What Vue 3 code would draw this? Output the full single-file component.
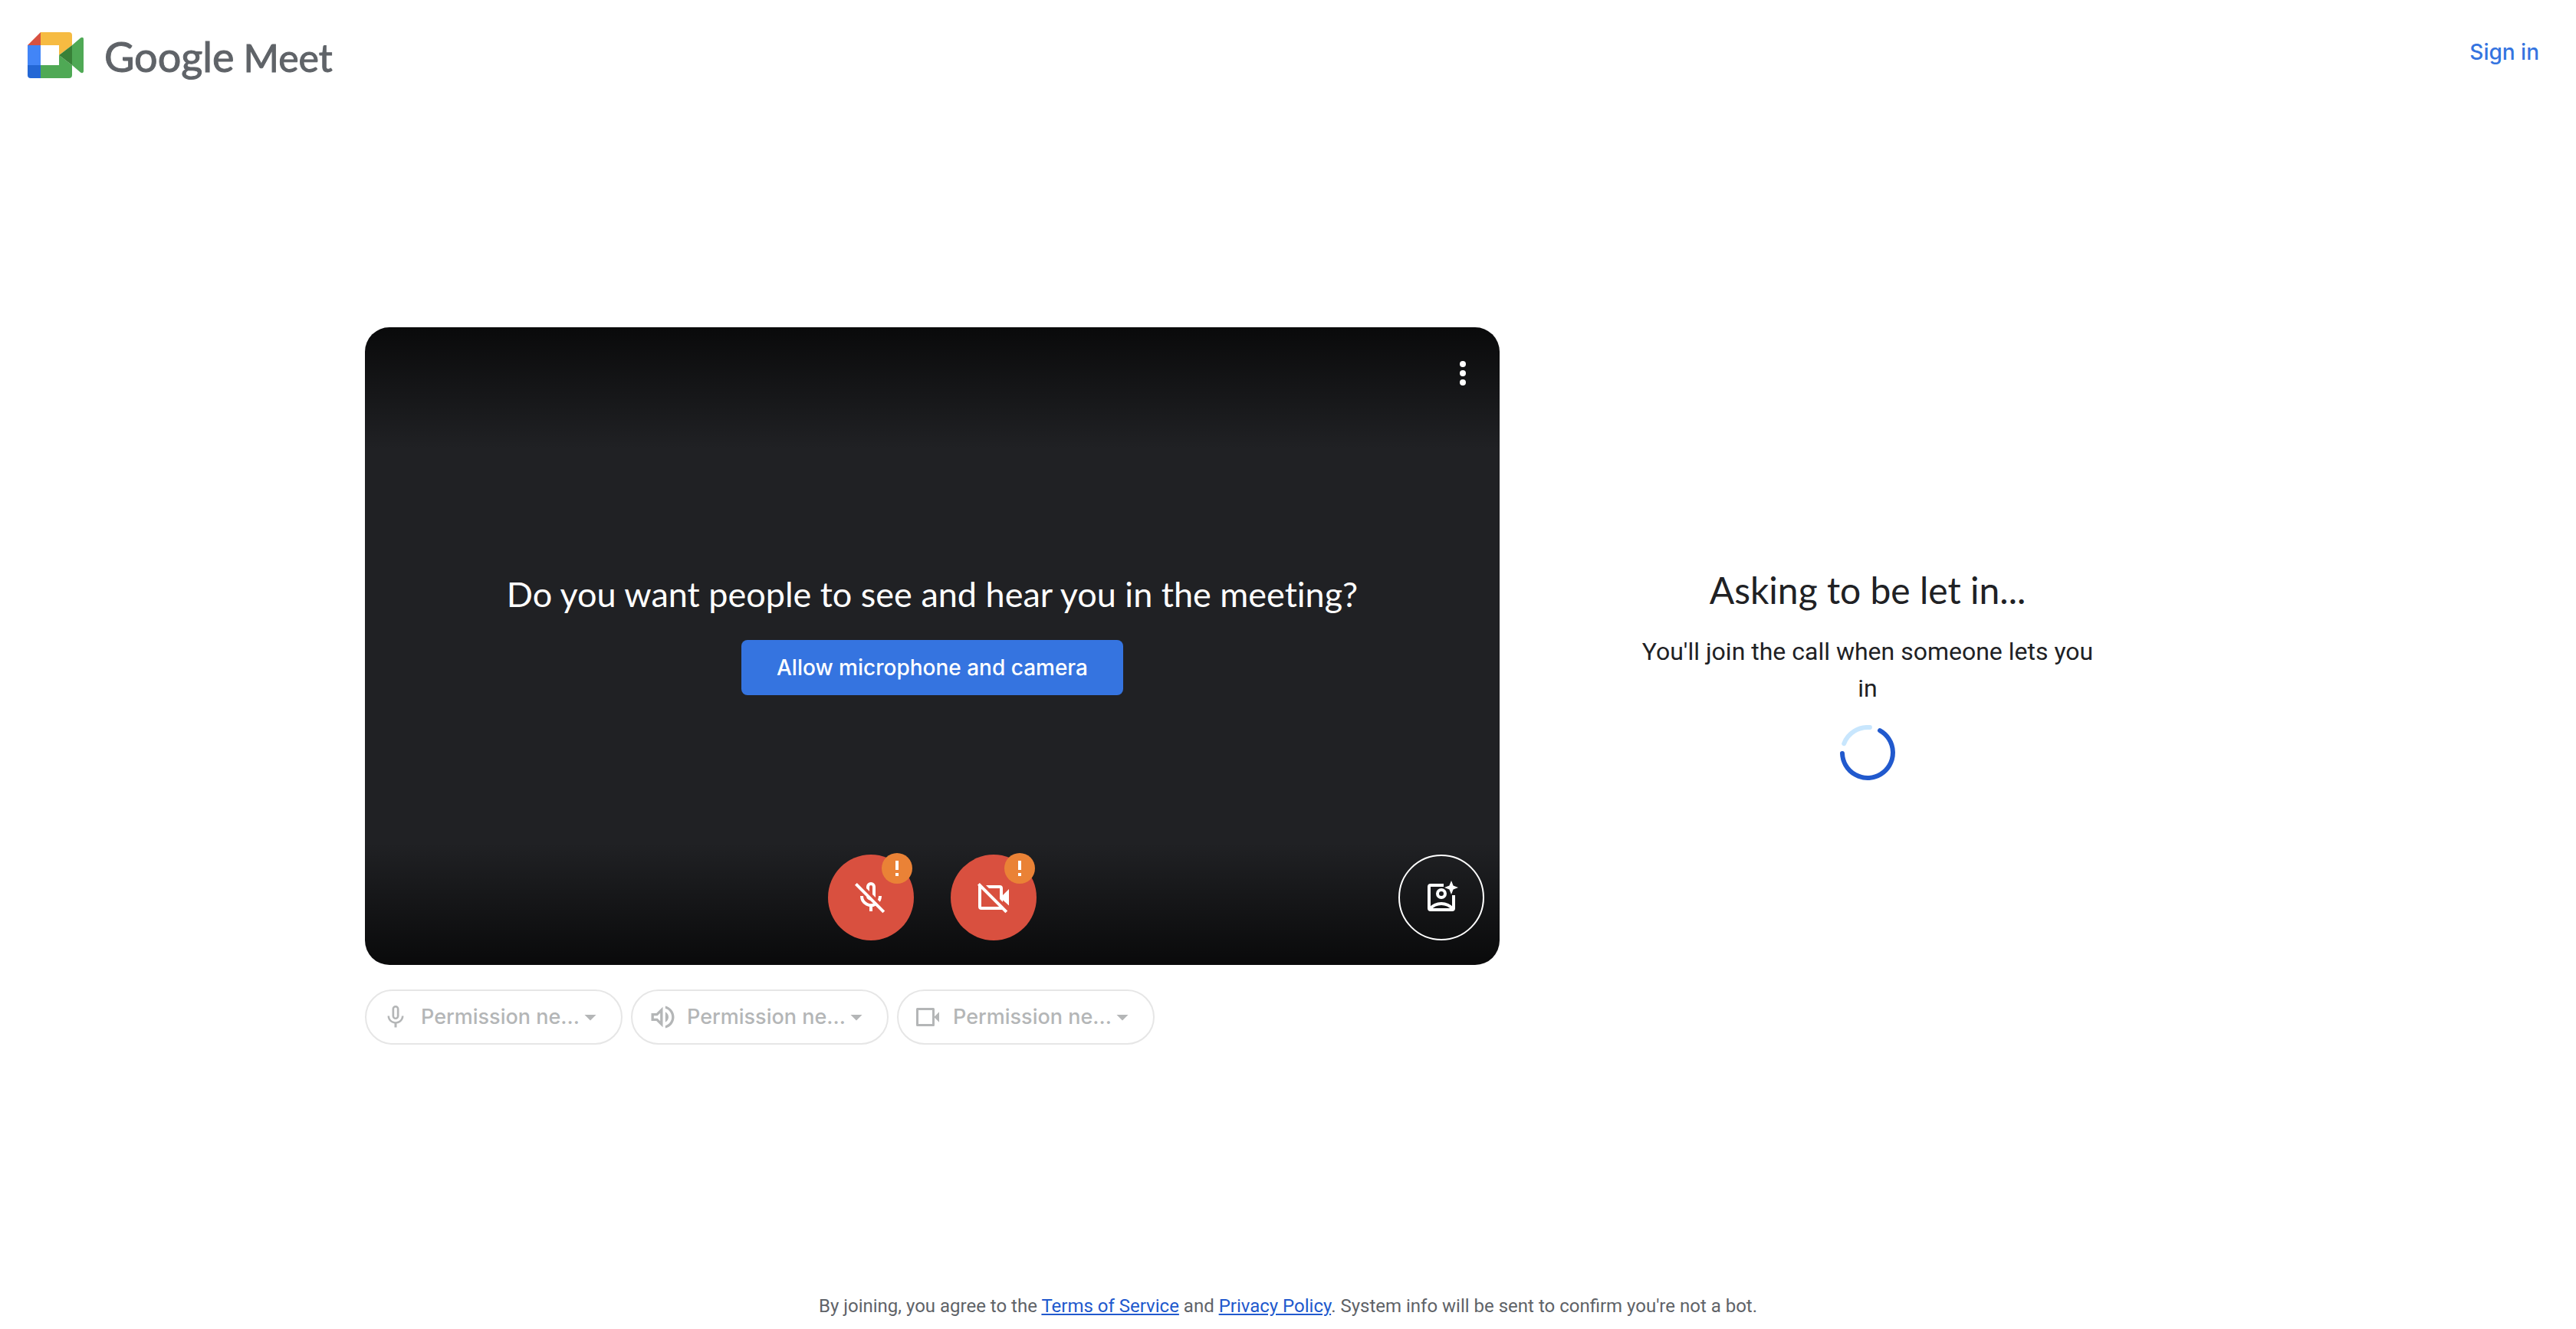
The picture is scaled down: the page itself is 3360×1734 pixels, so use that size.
<script setup>
const devices = [
  { id: 'mic', label: 'Microphone', viewBox: '0 0 24 24' },
  { id: 'speaker', label: 'Speaker', viewBox: '0.3 1.2 21.6 21.6' },
  { id: 'camera', label: 'Camera', viewBox: '0 0 24 24' },
]
</script>

<template>
  <div class="page">
    <header class="topbar">
      <div class="brand">
        <svg class="logo" viewBox="0 0 73 60" aria-hidden="true">
          <path fill="#d85140" d="M17 0v17H0z" />
          <path fill="#f6bb42" d="M17 0h37a4 4 0 0 1 4 4v13L41 30V17H17z" />
          <path fill="#4285f7" d="M0 17h17v26H0z" />
          <path fill="#2367d5" d="M0 43h17v17H4a4 4 0 0 1-4-4z" />
          <path fill="#4fa955" d="M17 43h24V30l17 13v13a4 4 0 0 1-4 4H17z" />
          <path fill="#4fa955" d="M58 17l11-9.4c2-1.5 4-.7 4 1.6v41.6c0 2.300-2 3.100-4 1.600L58 43z" />
          <path fill="#388138" d="M41 30l17-13v26z" />
        </svg>
        <div class="wordmark"><span class="google">Google</span> <span class="meet">Meet</span></div>
      </div>
      <a class="signin" href="#">Sign in</a>
    </header>

    <main class="lobby">
      <section class="preview">
        <div class="video">
          <div class="video-top">
            <button class="more" type="button" aria-label="More options">
              <svg class="icon-lg" viewBox="0 0 24 24" fill="#fff">
                <circle cx="12" cy="6" r="2" />
                <circle cx="12" cy="12" r="2" />
                <circle cx="12" cy="18" r="2" />
              </svg>
            </button>
          </div>

          <div class="prompt">
            <h2>Do you want people to see and hear you in the meeting?</h2>
            <button class="allow" type="button">Allow microphone and camera</button>
          </div>

          <div class="video-bottom">
            <div class="toggles">
              <button class="toggle" type="button" aria-label="Turn on microphone">
                <svg class="icon-lg" viewBox="0 0 24 24" fill="none" stroke="#fff" stroke-width="2">
                  <defs>
                    <clipPath id="above"><path d="M3 0h21v21z" /></clipPath>
                    <clipPath id="below"><path d="M0 1l23 23H0z" /></clipPath>
                  </defs>
                  <path clip-path="url(#above)" d="M10 12V5a2 2 0 0 1 4 0v8M18 11a6 6 0 0 1-2 4.500" />
                  <path clip-path="url(#below)" d="M6 11a6 6 0 0 0 9.500 4.900" />
                  <path clip-path="url(#below)" fill="#fff" stroke="none" d="M9 10v1a3 3 0 0 0 4 2.800z" />
                  <path d="M12 17v4M2.200 3.200l18.200 18.200" />
                </svg>
                <span class="badge">
                  <svg viewBox="0 0 40 40" fill="#fff"><path d="M18 10h4v12h-4zM18 26h4v4h-4z" /></svg>
                </span>
              </button>
              <button class="toggle" type="button" aria-label="Turn on camera">
                <svg class="icon-lg" viewBox="0 0 24 24" fill="none" stroke="#fff" stroke-width="2">
                  <path clip-path="url(#above)" d="M3 5h13a1 1 0 0 1 1 1v13" />
                  <path clip-path="url(#below)" d="M3 4v14a1 1 0 0 0 1 1h14" />
                  <path fill="#fff" stroke="none" d="M17 11.500l5-5V17.200l-5-4.500z" />
                  <path d="M2.200 3.200l18.200 18.200" />
                </svg>
                <span class="badge">
                  <svg viewBox="0 0 40 40" fill="#fff"><path d="M18 10h4v12h-4zM18 26h4v4h-4z" /></svg>
                </span>
              </button>
            </div>
            <button class="effects" type="button" aria-label="Apply visual effects">
              <svg class="icon-lg" viewBox="0 0 24 24" fill="none" stroke="#fff" stroke-width="2">
                <path d="M13.500 4H5a1 1 0 0 0-1 1v14a1 1 0 0 0 1 1h14a1 1 0 0 0 1-1v-8.500" />
                <circle cx="12" cy="9.500" r="2.500" />
                <path d="M4.500 19.500c4-4.600 11-4.600 15 0" />
                <path fill="#fff" stroke="none" d="M18.500 1l1.300 3.200L23 5.500l-3.200 1.300-1.300 3.200-1.300-3.200L14 5.500l3.200-1.300z" />
              </svg>
            </button>
          </div>
        </div>

        <div class="devices">
          <button v-for="d in devices" :key="d.id" class="device" type="button" disabled :aria-label="d.label + ': Permission needed'">
            <svg class="icon-md" :viewBox="d.viewBox" fill="#b4b6b7">
              <path v-if="d.id === 'mic'" d="M12 14c1.660 0 3-1.340 3-3V5c0-1.660-1.340-3-3-3S9 3.340 9 5v6c0 1.660 1.340 3 3 3zm-1.200-9.100c0-.66.54-1.200 1.200-1.200s1.200.54 1.200 1.200v6.200c0 .66-.54 1.200-1.200 1.200s-1.200-.54-1.200-1.200V4.900zM17.300 11c0 3-2.540 5.100-5.300 5.100S6.700 14 6.700 11H5c0 3.410 2.720 6.230 6 6.720V21h2v-3.280c3.280-.49 6-3.310 6-6.720h-1.700z" />
              <path v-else-if="d.id === 'speaker'" d="M3 9v6h4l5 5V4L7 9H3zm7-.17v6.340L7.830 13H5v-2h2.830L10 8.830zM16.500 12c0-1.770-1.020-3.290-2.500-4.030v8.050c1.480-.73 2.500-2.250 2.500-4.020zM14 3.230v2.060c2.890.86 5 3.540 5 6.710s-2.110 5.850-5 6.710v2.060c4.010-.91 7-4.490 7-8.770s-2.990-7.860-7-8.770z" />
              <path v-else fill-rule="evenodd" d="M3 4h14a1 1 0 0 1 1 1v6.500l4-4v9l-4-4V19a1 1 0 0 1-1 1H3a1 1 0 0 1-1-1V5a1 1 0 0 1 1-1zm1 2v12h12V6z" />
            </svg>
            <span class="device-name">Permission ne...</span>
            <svg class="icon-md" viewBox="0 0 24 24" fill="#b4b6b7"><path d="M7 10l5 5 5-5z" /></svg>
          </button>
        </div>
      </section>

      <aside class="status">
        <h1>Asking to be let in...</h1>
        <p>You'll join the call when someone lets you in</p>
        <svg class="spinner" viewBox="0 0 72 72" fill="none" stroke-width="6" stroke-linecap="round" role="img" aria-label="Waiting">
          <path stroke="#c8e6fd" d="M5.200 24.200A33 33 0 0 1 38.900 3.100" />
          <path stroke="#2159cd" d="M52 7.100A33 33 0 1 1 3 37" />
        </svg>
      </aside>
    </main>

    <footer class="legal">
      By joining, you agree to the <a href="#">Terms of Service</a> and <a href="#">Privacy Policy</a>. System info will be sent to confirm you're not a bot.
    </footer>
  </div>
</template>

<style>
body {
  margin: 0;
  background: #fff;
}
</style>

<style scoped>
.page {
  display: flex;
  flex-direction: column;
  min-height: 100vh;
  font-family: Roboto, sans-serif;
  color: #202124;
}

button {
  border: 0;
  padding: 0;
  background: none;
  font: inherit;
}

svg {
  display: block;
}

.icon-lg {
  width: 48px;
  height: 48px;
}

.icon-md {
  flex: none;
  width: 36px;
  height: 36px;
}

.topbar {
  display: flex;
  justify-content: space-between;
  align-items: flex-start;
  box-sizing: border-box;
  height: 144px;
  padding: 42px 48px 0 36px;
}

.brand {
  display: flex;
  gap: 27px;
}

.logo {
  width: 73px;
  height: 60px;
}

.wordmark {
  display: flex;
  align-items: baseline;
  gap: 12px;
  font-family: Lato, sans-serif;
  line-height: 64px;
  color: #5f6368;
  -webkit-text-stroke: 1px #5f6368;
}

.google {
  font-size: 54px;
}

.meet {
  font-size: 50px;
}

.signin {
  font: 500 28px/52px Inter, sans-serif;
  color: #3574e0;
  text-decoration: none;
}

.lobby {
  flex: 1;
  display: flex;
  align-items: center;
  gap: 32px;
  width: 100%;
  max-width: 2408px;
  margin: 0 auto;
}

.preview {
  flex: 1480;
}

.video {
  display: flex;
  flex-direction: column;
  aspect-ratio: 1480 / 832;
  border-radius: 32px;
  background:
    linear-gradient(rgba(0, 0, 0, 0.7), transparent) top / 100% 160px no-repeat,
    linear-gradient(transparent, rgba(0, 0, 0, 0.7)) bottom / 100% 160px no-repeat,
    #202124;
}

.video-top {
  display: flex;
  justify-content: flex-end;
  padding: 36px 24px;
}

.prompt {
  flex: 1;
  display: flex;
  flex-direction: column;
  align-items: center;
  justify-content: center;
  gap: 40px;
}

.prompt h2 {
  margin: 0;
  font: 400 45px/40px Lato, sans-serif;
  font-variant-ligatures: none;
  color: #fff;
}

.allow {
  height: 72px;
  padding: 0 46px;
  border-radius: 8px;
  background: #3574e0;
  color: #fff;
  font: 500 28px/36px Inter, sans-serif;
}

.video-bottom {
  display: grid;
  grid-template-columns: 1fr auto 1fr;
  padding: 0 20px 32px;
}

.toggles {
  grid-column: 2;
  display: flex;
  gap: 48px;
}

.toggle,
.effects {
  position: relative;
  display: flex;
  align-items: center;
  justify-content: center;
  box-sizing: border-box;
  width: 112px;
  height: 112px;
  border-radius: 50%;
}

.toggle {
  background: #d9503f;
}

.effects {
  justify-self: end;
  border: 2px solid #fff;
}

.badge {
  position: absolute;
  top: -2px;
  right: 2px;
  width: 40px;
  height: 40px;
  border-radius: 50%;
  background: #ea8236;
}

.devices {
  display: flex;
  gap: 11px;
  margin-top: 32px;
}

.device {
  display: flex;
  align-items: center;
  box-sizing: border-box;
  width: 336px;
  height: 72px;
  padding: 0 22px 0 20px;
  border: 2px solid #e6e6e6;
  border-radius: 36px;
  color: #b4b6b7;
  font: 500 27px/36px Inter, sans-serif;
}

.device-name {
  flex: 1;
  min-width: 0;
  padding-left: 15px;
  text-align: left;
  white-space: nowrap;
}

.status {
  flex: 896;
  display: flex;
  flex-direction: column;
  align-items: center;
  padding-bottom: 34px;
  text-align: center;
}

.status h1 {
  margin: 0;
  font: 400 48px/64px Lato, sans-serif;
}

.status p {
  max-width: 608px;
  margin: 24px 0;
  font-size: 32px;
  line-height: 48px;
}

.spinner {
  width: 72px;
  height: 72px;
}

.legal {
  box-sizing: border-box;
  height: 88px;
  padding: 42px 24px 0;
  font-size: 24px;
  line-height: 32px;
  text-align: center;
  color: #5f6368;
}

.legal a {
  color: #2159cd;
  text-decoration: underline;
}
</style>
